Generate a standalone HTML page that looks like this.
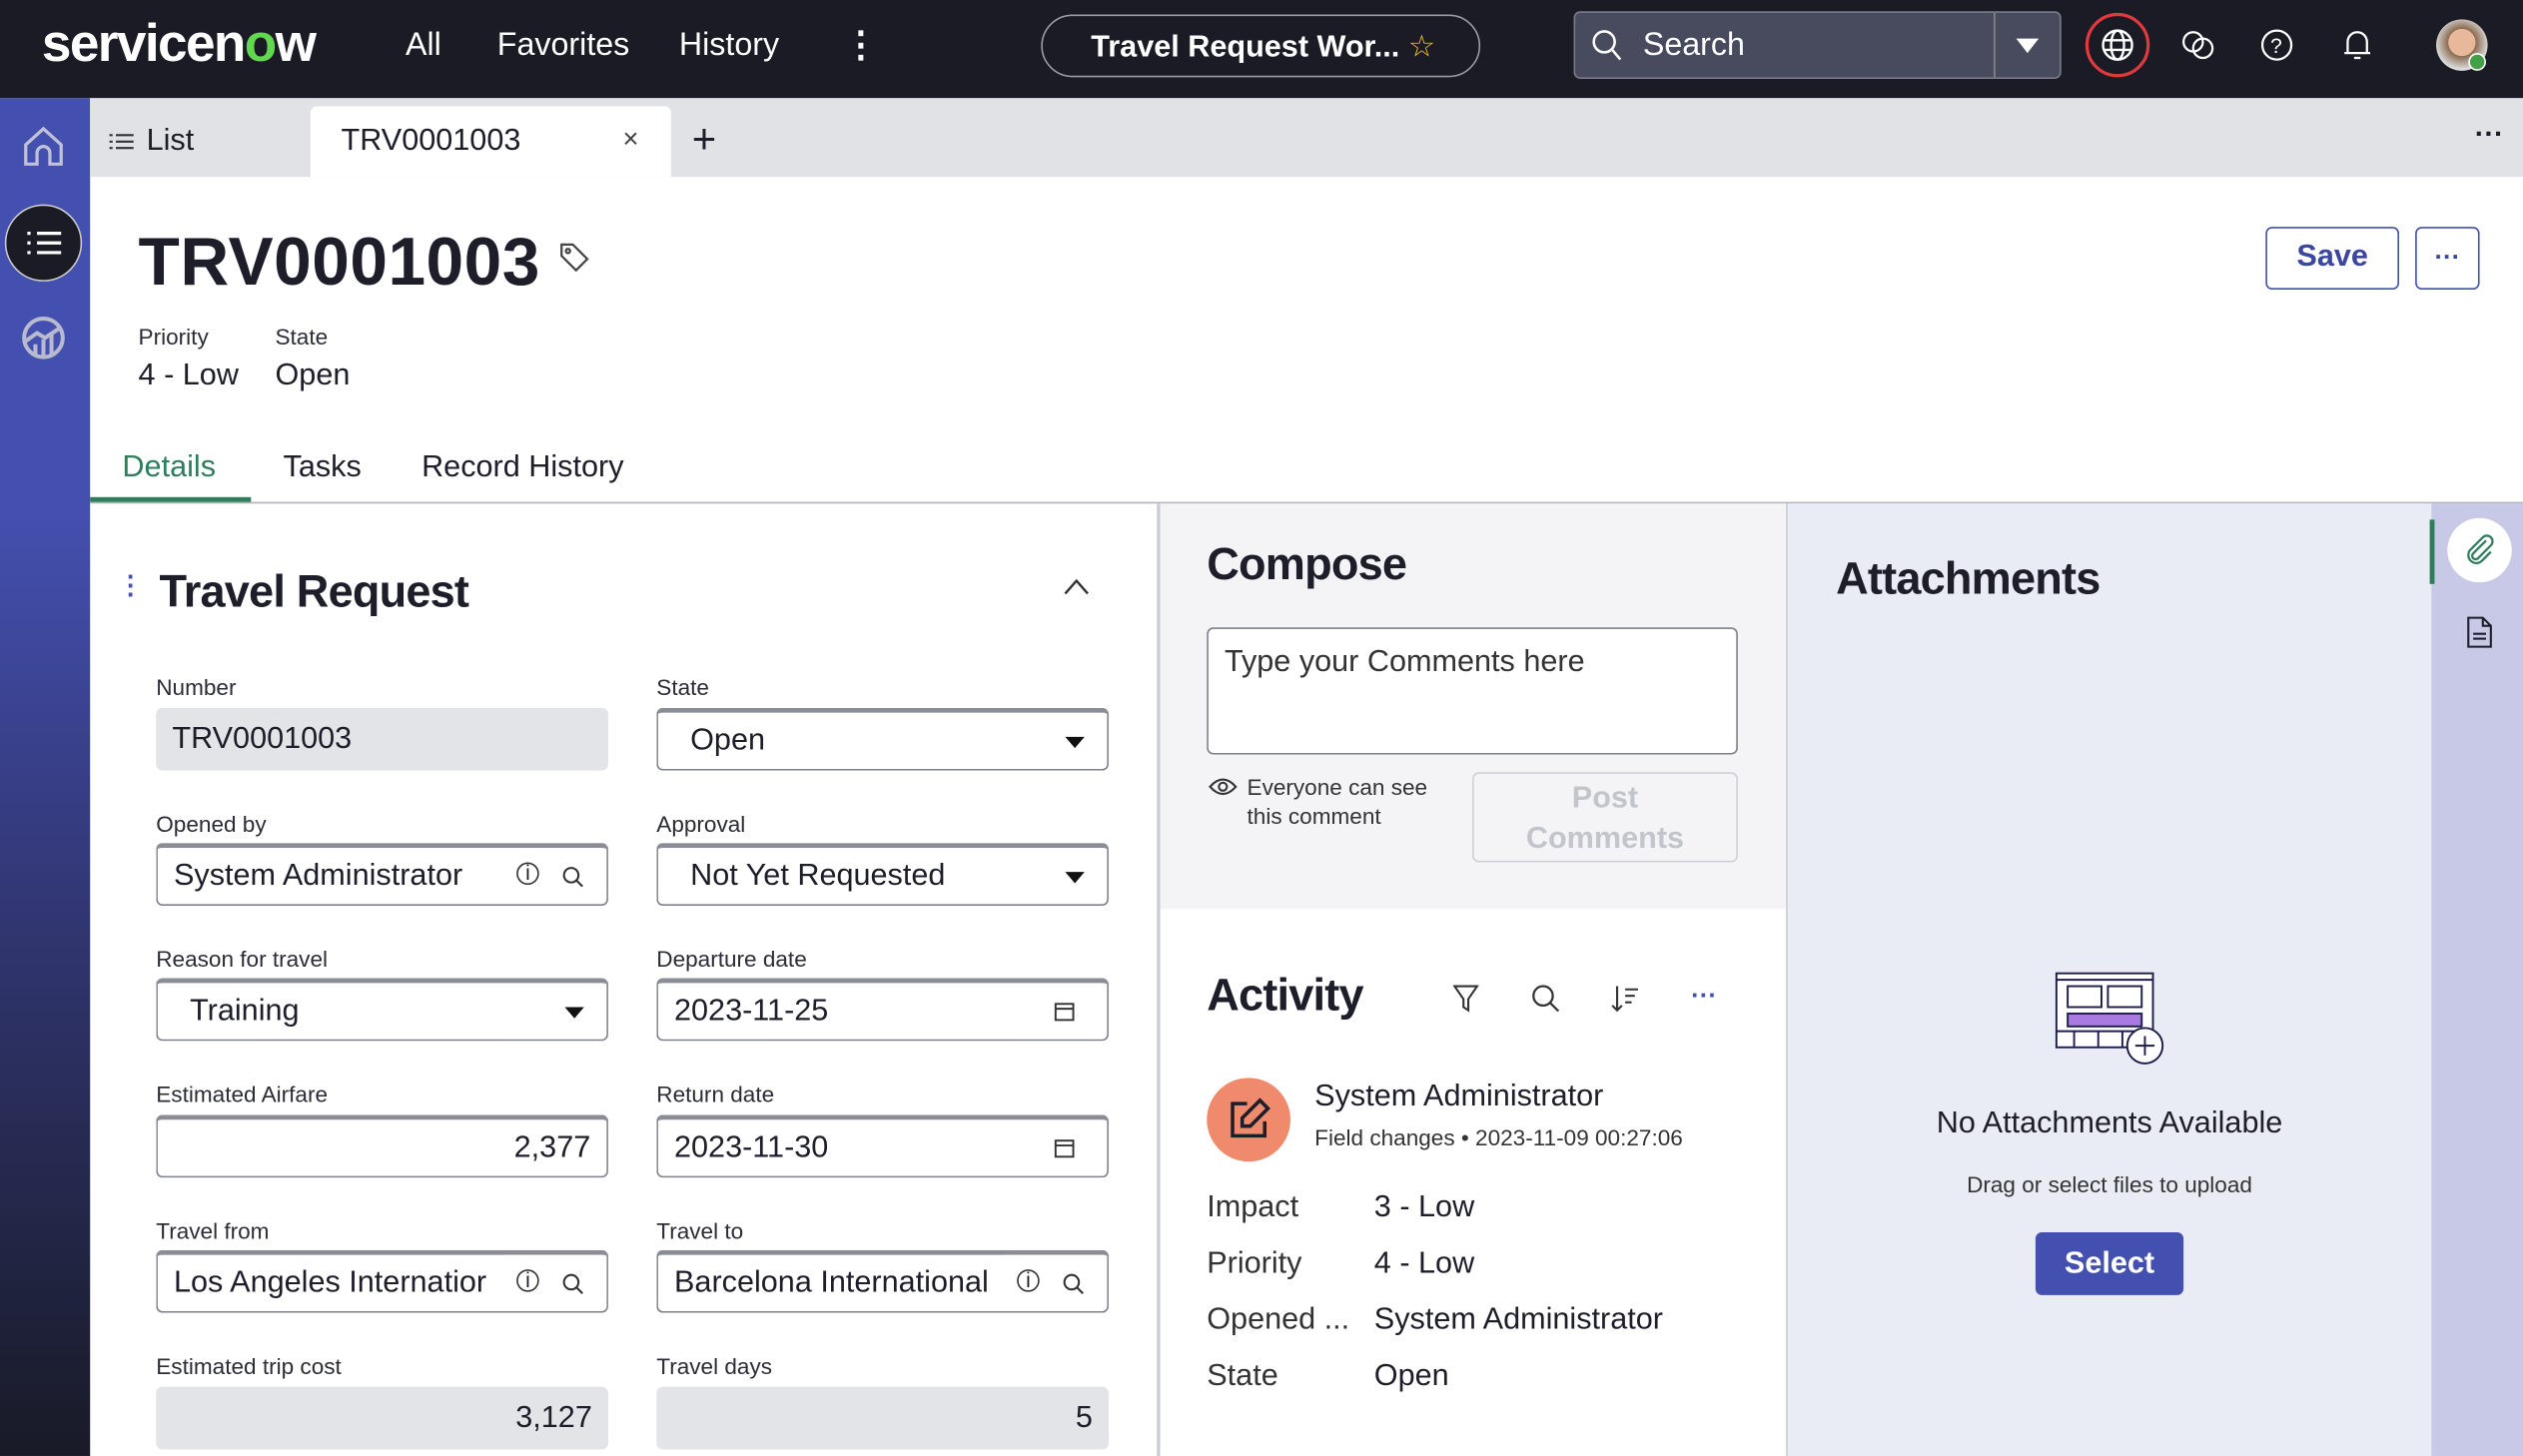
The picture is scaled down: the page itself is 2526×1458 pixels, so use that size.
<!DOCTYPE html>
<html><head><meta charset="utf-8"><style>
*{box-sizing:border-box;margin:0;padding:0}
html,body{width:2526px;height:1458px;overflow:hidden;background:#fff}
#w{width:1568px;height:905px;transform:scale(1.611);transform-origin:0 0;position:relative;font-family:"Liberation Sans",sans-serif;color:#1d1e29}
.a{position:absolute}
.top{left:0;top:0;width:1568px;height:61px;background:#1a1b24;color:#fff}
.side{left:0;top:61px;width:56px;height:844px;background:linear-gradient(#4450b0 0%,#4450b0 30%,#343a7c 55%,#181a26 100%)}
.tabs{left:56px;top:61px;width:1512px;height:49px;background:#e1e2e6}
.lbl{font-size:14px;color:#2b2c36}
.in{height:39px;border:1.5px solid #7e818c;border-radius:4px;background:#fff;font-size:19px;padding:0 10px;display:flex;align-items:center;border-top-width:3px;border-top-color:#8a8d96}
.ro{background:#e3e4e8;border:none}
.tri{position:absolute;right:14px;top:15px;width:0;height:0;border-left:6px solid transparent;border-right:6px solid transparent;border-top:7px solid #111}
</style></head><body><div id="w">
<div class="a top">
 <div class="a" style="left:26px;top:8px;font-size:33px;font-weight:bold;letter-spacing:-1px">servicen<span style="color:#62d84e">o</span>w</div>
 <div class="a" style="left:252px;top:17px;font-size:20px">All</div>
 <div class="a" style="left:309px;top:17px;font-size:20px">Favorites</div>
 <div class="a" style="left:422px;top:17px;font-size:20px">History</div>
 <div class="a" style="left:524px;top:15px;font-size:22px;font-weight:bold">⋮</div>
 <div class="a" style="left:647px;top:9px;width:273px;height:39px;border:1.5px solid #9a9ba5;border-radius:20px;font-size:19px;font-weight:bold;padding:8px 0 0 30px">Travel Request Wor... <span style="color:#f5c518;font-weight:normal">☆</span></div>
 <div class="a" style="left:978px;top:7px;width:303px;height:42px;background:#484a5e;border:1.5px solid #7a7c8a;border-radius:4px"></div>
 <div class="a" style="left:1239px;top:8px;width:1px;height:40px;background:#888"></div>
 <svg class="a" style="left:989px;top:18px" width="20" height="22"><circle cx="8" cy="8" r="6.5" fill="none" stroke="#fff" stroke-width="1.6"/><path d="M13 13l5 6" stroke="#fff" stroke-width="1.6"/></svg>
 <div class="a" style="left:1021px;top:17px;font-size:20px">Search</div>
 <div class="a" style="left:1253px;top:24px;border-left:7px solid transparent;border-right:7px solid transparent;border-top:9px solid #fff"></div>
 <div class="a" style="left:1296px;top:8px;width:40px;height:40px;border:2.5px solid #e03a3e;border-radius:50%"></div>
 <svg class="a" style="left:1305px;top:17px" width="22" height="22" fill="none" stroke="#fff" stroke-width="1.5"><circle cx="11" cy="11" r="9"/><ellipse cx="11" cy="11" rx="4" ry="9"/><path d="M2 8h18M2 14h18"/></svg>
 <svg class="a" style="left:1355px;top:18px" width="22" height="22" fill="none" stroke="#fff" stroke-width="1.4"><circle cx="8" cy="8" r="6"/><circle cx="14" cy="12" r="6"/></svg>
 <svg class="a" style="left:1404px;top:17px" width="22" height="22" fill="none" stroke="#fff" stroke-width="1.4"><circle cx="11" cy="11" r="9"/><text x="7" y="16" fill="#fff" stroke="none" font-size="13" font-family="Liberation Sans">?</text></svg>
 <svg class="a" style="left:1455px;top:17px" width="20" height="22" fill="none" stroke="#fff" stroke-width="1.4"><path d="M4 16V9a6 6 0 0112 0v7zM2 16h16M8 19h4"/></svg>
 <div class="a" style="left:1514px;top:12px;width:32px;height:32px;border-radius:50%;background:radial-gradient(circle at 50% 45%,#e8b89a 35%,#8a6a50 36%,#ddd 70%)"></div>
 <div class="a" style="left:1534px;top:33px;width:11px;height:11px;border-radius:50%;background:#43a047;border:1.5px solid #fff"></div>
</div>
<div class="a side">
 <svg class="a" style="left:13px;top:16px" width="28" height="28" fill="none" stroke="#c0c2d8" stroke-width="2"><path d="M3 13L14 3l11 10v12h-7v-7a4 4 0 00-8 0v7H3z"/></svg>
 <div class="a" style="left:3px;top:66px;width:48px;height:48px;border-radius:50%;background:#1a1b24;border:1.5px solid #ccc"></div>
 <svg class="a" style="left:15px;top:81px" width="24" height="18" stroke="#fff" stroke-width="2"><path d="M8 3h15M8 9h15M8 15h15M2 3h2M2 9h2M2 15h2"/></svg>
 <svg class="a" style="left:12px;top:134px" width="30" height="30" fill="none" stroke="#b8bad0" stroke-width="2.5"><circle cx="15" cy="15" r="12"/><path d="M10 26V19M15 26V16M20 26V13M4 17l7-5 5 3 9-6"/></svg>
</div>
<div class="a tabs">
 <svg class="a" style="left:12px;top:21px" width="16" height="12" stroke="#333" stroke-width="1.3"><path d="M4 2h11M4 6h11M4 10h11M0 2h2M0 6h2M0 10h2"/></svg>
 <div class="a" style="left:35px;top:16px;font-size:19px">List</div>
 <div class="a" style="left:137px;top:5px;width:224px;height:44px;background:#fff;border-radius:4px 4px 0 0"></div>
 <div class="a" style="left:156px;top:16px;font-size:19px">TRV0001003</div>
 <div class="a" style="left:331px;top:16px;font-size:17px;color:#444">×</div>
 <div class="a" style="left:374px;top:10px;font-size:26px;font-weight:300">+</div>
 <div class="a" style="left:1482px;top:12px;font-size:18px;font-weight:bold">···</div>
</div>
<div class="a" style="left:86px;top:139px;font-size:42px;font-weight:bold;letter-spacing:0.3px">TRV0001003</div>
<svg class="a" style="left:347px;top:150px" width="20" height="20" fill="none" stroke="#444" stroke-width="1.4"><path d="M2 2h7l9 9-7 7-9-9z"/><circle cx="6" cy="6" r="1.3"/></svg>
<div class="a" style="left:1408px;top:141px;width:83px;height:39px;border:1.5px solid #4450b0;border-radius:4px;color:#3a46a0;font-size:19px;font-weight:bold;text-align:center;line-height:36px">Save</div>
<div class="a" style="left:1501px;top:141px;width:40px;height:39px;border:1.5px solid #4450b0;border-radius:4px;color:#3a46a0;font-size:16px;font-weight:bold;text-align:center;line-height:38px">···</div>
<div class="a lbl" style="left:86px;top:201px">Priority</div><div class="a lbl" style="left:171px;top:201px">State</div>
<div class="a" style="left:86px;top:223px;font-size:19px">4 - Low</div><div class="a" style="left:171px;top:223px;font-size:19px">Open</div>
<div class="a" style="left:76px;top:280px;font-size:19px;color:#2e7d5b">Details</div>
<div class="a" style="left:176px;top:280px;font-size:19px">Tasks</div>
<div class="a" style="left:262px;top:280px;font-size:19px">Record History</div>
<div class="a" style="left:56px;top:312px;width:1512px;height:1px;background:#b0b2ba"></div>
<div class="a" style="left:56px;top:309px;width:100px;height:3px;background:#2e7d5b"></div>
<div class="a" style="left:719px;top:313px;width:1.5px;height:592px;background:#c9cbd2"></div>
<div class="a" style="left:73px;top:354px;color:#4450b0;font-weight:bold;font-size:16px">⋮</div>
<div class="a" style="left:99px;top:352px;font-size:28px;font-weight:bold;letter-spacing:-0.5px">Travel Request</div>
<svg class="a" style="left:661px;top:359px" width="16" height="12" fill="none" stroke="#333" stroke-width="1.5"><path d="M1 10l7-8 7 8"/></svg>
<div class="a lbl" style="left:97px;top:419px">Number</div><div class="a lbl" style="left:408px;top:419px">State</div>
<div class="a in ro" style="left:97px;top:440px;width:281px">TRV0001003</div>
<div class="a in" style="left:408px;top:440px;width:281px;padding-left:20px">Open<i class="tri"></i></div>
<div class="a lbl" style="left:97px;top:504px">Opened by</div><div class="a lbl" style="left:408px;top:504px">Approval</div>
<div class="a in" style="left:97px;top:524px;width:281px">System Administrator<span style="position:absolute;right:42px;top:9px;font-size:13px;border:1.2px solid #333;border-radius:50%;width:14px;height:14px;line-height:12px;text-align:center">i</span><svg style="position:absolute;right:14px;top:11px" width="14" height="14" fill="none" stroke="#333" stroke-width="1.3"><circle cx="6" cy="6" r="4.5"/><path d="M9 9l4 4"/></svg></div>
<div class="a in" style="left:408px;top:524px;width:281px;padding-left:20px">Not Yet Requested<i class="tri"></i></div>
<div class="a lbl" style="left:97px;top:588px">Reason for travel</div><div class="a lbl" style="left:408px;top:588px">Departure date</div>
<div class="a in" style="left:97px;top:608px;width:281px;padding-left:20px">Training<i class="tri"></i></div>
<div class="a in" style="left:408px;top:608px;width:281px">2023-11-25<svg style="position:absolute;right:20px;top:11px" width="13" height="13" fill="none" stroke="#333" stroke-width="1.2"><rect x="1" y="2" width="11" height="10"/><path d="M1 5h11"/></svg></div>
<div class="a lbl" style="left:97px;top:672px">Estimated Airfare</div><div class="a lbl" style="left:408px;top:672px">Return date</div>
<div class="a in" style="left:97px;top:693px;width:281px;justify-content:flex-end">2,377</div>
<div class="a in" style="left:408px;top:693px;width:281px">2023-11-30<svg style="position:absolute;right:20px;top:11px" width="13" height="13" fill="none" stroke="#333" stroke-width="1.2"><rect x="1" y="2" width="11" height="10"/><path d="M1 5h11"/></svg></div>
<div class="a lbl" style="left:97px;top:757px">Travel from</div><div class="a lbl" style="left:408px;top:757px">Travel to</div>
<div class="a in" style="left:97px;top:777px;width:281px;overflow:hidden;white-space:nowrap">Los Angeles Internatior<span style="position:absolute;right:0;top:0;width:64px;height:34px;background:#fff"></span><span style="position:absolute;right:42px;top:9px;font-size:13px;border:1.2px solid #333;border-radius:50%;width:14px;height:14px;line-height:12px;text-align:center">i</span><svg style="position:absolute;right:14px;top:11px" width="14" height="14" fill="none" stroke="#333" stroke-width="1.3"><circle cx="6" cy="6" r="4.5"/><path d="M9 9l4 4"/></svg></div>
<div class="a in" style="left:408px;top:777px;width:281px;overflow:hidden;white-space:nowrap">Barcelona International<span style="position:absolute;right:0;top:0;width:64px;height:34px;background:#fff"></span><span style="position:absolute;right:42px;top:9px;font-size:13px;border:1.2px solid #333;border-radius:50%;width:14px;height:14px;line-height:12px;text-align:center">i</span><svg style="position:absolute;right:14px;top:11px" width="14" height="14" fill="none" stroke="#333" stroke-width="1.3"><circle cx="6" cy="6" r="4.5"/><path d="M9 9l4 4"/></svg></div>
<div class="a lbl" style="left:97px;top:841px">Estimated trip cost</div><div class="a lbl" style="left:408px;top:841px">Travel days</div>
<div class="a in ro" style="left:97px;top:862px;width:281px;justify-content:flex-end">3,127</div>
<div class="a in ro" style="left:408px;top:862px;width:281px;justify-content:flex-end">5</div>
<div class="a" style="left:721px;top:313px;width:389px;height:252px;background:#f4f4f6"></div>
<div class="a" style="left:750px;top:335px;font-size:28px;font-weight:bold;letter-spacing:-0.5px">Compose</div>
<div class="a" style="left:750px;top:390px;width:330px;height:79px;background:#fff;border:1.5px solid #7e818c;border-radius:4px;font-size:19px;color:#333;padding:10px">Type your Comments here</div>
<svg class="a" style="left:751px;top:482px" width="18" height="14" fill="none" stroke="#333" stroke-width="1.3"><path d="M1 7q8-9 16 0q-8 9-16 0z"/><circle cx="9" cy="7" r="2.5"/></svg>
<div class="a" style="left:775px;top:480px;font-size:14px;line-height:18px;color:#333">Everyone can see<br>this comment</div>
<div class="a" style="left:915px;top:480px;width:165px;height:56px;border:1.5px solid #cfd0d6;border-radius:4px;color:#c3c5cc;font-size:19px;font-weight:bold;text-align:center;line-height:25px;padding-top:3px">Post<br>Comments</div>
<div class="a" style="left:750px;top:603px;font-size:28px;font-weight:bold;letter-spacing:-0.5px">Activity</div>
<svg class="a" style="left:903px;top:612px" width="16" height="18" fill="none" stroke="#333" stroke-width="1.3"><path d="M1 1h14l-5.5 8v7l-3-2V9z"/></svg>
<svg class="a" style="left:951px;top:611px" width="20" height="20" fill="none" stroke="#333" stroke-width="1.4"><circle cx="8" cy="8" r="6"/><path d="M12.5 12.5l5 5"/></svg>
<svg class="a" style="left:1001px;top:612px" width="18" height="18" fill="none" stroke="#333" stroke-width="1.3"><path d="M4 1v15M1 13l3 3 3-3M9 3h8M9 7h6M9 11h4"/></svg>
<div class="a" style="left:1051px;top:611px;font-size:16px;font-weight:bold;color:#4450b0">···</div>
<div class="a" style="left:750px;top:670px;width:52px;height:52px;border-radius:50%;background:#f08a6d"></div>
<svg class="a" style="left:762px;top:682px" width="28" height="28" fill="none" stroke="#1d1e29" stroke-width="2.2"><path d="M13 4H4v20h20v-9"/><path d="M21 2l5 5-11 11h-5v-5z"/></svg>
<div class="a" style="left:817px;top:671px;font-size:19px">System Administrator</div>
<div class="a" style="left:817px;top:699px;font-size:14px;color:#333">Field changes • 2023-11-09 00:27:06</div>
<div class="a" style="left:750px;top:733px;font-size:19px;line-height:35px;color:#333">Impact<br>Priority<br>Opened ...<br>State</div>
<div class="a" style="left:854px;top:733px;font-size:19px;line-height:35px">3 - Low<br>4 - Low<br>System Administrator<br>Open</div>
<div class="a" style="left:1110px;top:313px;width:1.5px;height:592px;background:#c9cbd2"></div>
<div class="a" style="left:1111px;top:313px;width:400px;height:592px;background:#e9ecf5"></div>
<div class="a" style="left:1141px;top:344px;font-size:28px;font-weight:bold;letter-spacing:-0.5px">Attachments</div>
<svg class="a" style="left:1276px;top:603px" width="72" height="60" fill="none" stroke="#1d1e4a" stroke-width="1.2"><rect x="2" y="2" width="60" height="46" fill="#fff"/><path d="M2 6h60"/><rect x="9" y="10" width="21" height="13"/><rect x="34" y="10" width="21" height="13"/><rect x="9" y="27" width="46" height="8" fill="#a97ae0"/><path d="M2 38h60M13 38v10M28 38v10M43 38v10"/><circle cx="57" cy="47" r="11" fill="#fff"/><path d="M57 41v12M51 47h12"/></svg>
<div class="a" style="left:1111px;top:688px;width:400px;text-align:center;font-size:19px">No Attachments Available</div>
<div class="a" style="left:1111px;top:728px;width:400px;text-align:center;font-size:14px;color:#333">Drag or select files to upload</div>
<div class="a" style="left:1265px;top:766px;width:92px;height:39px;background:#4450b0;border-radius:4px;color:#fff;font-size:19px;font-weight:bold;text-align:center;line-height:39px">Select</div>
<div class="a" style="left:1511px;top:313px;width:57px;height:592px;background:#c7c9e6"></div>
<div class="a" style="left:1510px;top:323px;width:3px;height:40px;background:#2e7d5b"></div>
<div class="a" style="left:1521px;top:322px;width:40px;height:40px;border-radius:50%;background:#fff"></div>
<svg class="a" style="left:1531px;top:332px" width="20" height="20" fill="none" stroke="#2e7d5b" stroke-width="1.4"><path d="M14 4L6 12a2 2 0 003 3l8-8a3.5 3.5 0 00-5-5L4 10a5 5 0 007 7l6-6"/></svg>
<svg class="a" style="left:1532px;top:383px" width="18" height="20" fill="none" stroke="#1d1e29" stroke-width="1.3"><path d="M2 1h9l5 5v13H2zM11 1v5h5M5 11h8M5 14h8"/></svg>
</div></body></html>
